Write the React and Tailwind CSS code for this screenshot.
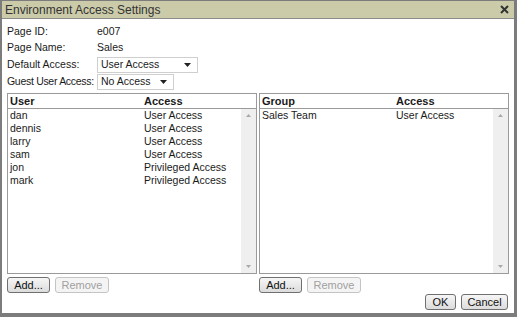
import React from 'react';

const users = [
    ['dan', 'User Access'],
    ['dennis', 'User Access'],
    ['larry', 'User Access'],
    ['sam', 'User Access'],
    ['jon', 'Privileged Access'],
    ['mark', 'Privileged Access'],
];

const groups = [['Sales Team', 'User Access']];

function Btn({ children, disabled, className = '' }) {
    return (
        <button
            className={`h-[16px] rounded-[3px] border text-[11px] leading-none ${disabled ? 'border-[#c4c4c4] text-[#a0a0a0] bg-[#f4f4f4]' : 'border-[#707070] text-[#111] bg-gradient-to-b from-[#f6f6f6] to-[#dcdcdc]'} ${className}`}
        >
            {children}
        </button>
    );
}

function Select({ value, width }) {
    return (
        <div className={`flex items-center justify-between h-[16px] border border-[#cfcfcf] bg-white pl-[3px] pr-[6px] ${width}`}>
            <span>{value}</span>
            <svg width="7" height="4" viewBox="0 0 7 4"><path d="M0 0h7L3.5 4z" fill="#222" /></svg>
        </div>
    );
}

function ListPanel({ title, rows, colX }) {
    return (
        <div className="w-[250px] flex flex-col">
            <div className="h-[181px] border border-[#9a9a9a] flex flex-col bg-white">
                <div className="h-[15px] flex font-bold border-b border-[#9a9a9a] pl-[2px] leading-[14px] text-[11px]">
                    <span className={colX}>{title}</span>
                    <span>Access</span>
                </div>
                <div className="flex-1 flex">
                    <div className="flex-1 pl-[2px]">
                        {rows.map(([n, a]) => (
                            <div key={n} className="flex h-[13px] leading-[13px]">
                                <span className={colX}>{n}</span>
                                <span>{a}</span>
                            </div>
                        ))}
                    </div>
                    <div className="w-[15px] bg-[#efefef] flex flex-col justify-between items-center py-[5px]">
                        <svg width="5" height="3" viewBox="0 0 5 3"><path d="M0 3h5L2.5 0z" fill="#a8a8a8" /></svg>
                        <svg width="5" height="3" viewBox="0 0 5 3"><path d="M0 0h5L2.5 3z" fill="#a8a8a8" /></svg>
                    </div>
                </div>
            </div>
            <div className="flex gap-[5px] mt-[3px]">
                <Btn className="w-[43px]">Add...</Btn>
                <Btn disabled className="w-[54px]">Remove</Btn>
            </div>
        </div>
    );
}

export default function App() {
    return (
        <div
            className="w-[517px] h-[317px] bg-white border-l-2 border-r-[3px] border-t border-b-[4px] border-[#7c7c7c] flex flex-col text-[10.5px] text-[#1a1a1a]"
            style={{ fontFamily: "'Liberation Sans', Arial, sans-serif" }}
        >
            <div className="h-[18px] bg-[#cbcbaa] border-b border-[#8c8c8c] flex items-center justify-between pl-[3px] pr-[5px]">
                <span className="text-[12px] text-[#333]">Environment Access Settings</span>
                <svg width="9" height="9" viewBox="0 0 9 9"><path d="M1 1l7 7M8 1L1 8" stroke="#333" strokeWidth="2" /></svg>
            </div>
            <div className="flex-1 flex flex-col pl-[5px] pr-[4px] pt-[5px]">
                <div className="flex h-[16px] items-center">
                    <span className="w-[90px]">Page ID:</span>
                    <span>e007</span>
                </div>
                <div className="flex h-[16px] items-center">
                    <span className="w-[90px]">Page Name:</span>
                    <span>Sales</span>
                </div>
                <div className="flex h-[17px] items-center">
                    <span className="w-[90px]">Default Access:</span>
                    <Select value="User Access" width="w-[101px]" />
                </div>
                <div className="flex h-[17px] items-center">
                    <span className="w-[90px] whitespace-nowrap tracking-[-0.3px]">Guest User Access:</span>
                    <Select value="No Access" width="w-[77px]" />
                </div>
                <div className="flex gap-[2px] mt-[3px]">
                    <ListPanel title="User" rows={users} colX="w-[134px]" />
                    <ListPanel title="Group" rows={groups} colX="w-[134px]" />
                </div>
                <div className="flex justify-end gap-[5px] mt-[1px] pr-[2px]">
                    <Btn className="w-[31px]">OK</Btn>
                    <Btn className="w-[47px]">Cancel</Btn>
                </div>
            </div>
        </div>
    );
}
